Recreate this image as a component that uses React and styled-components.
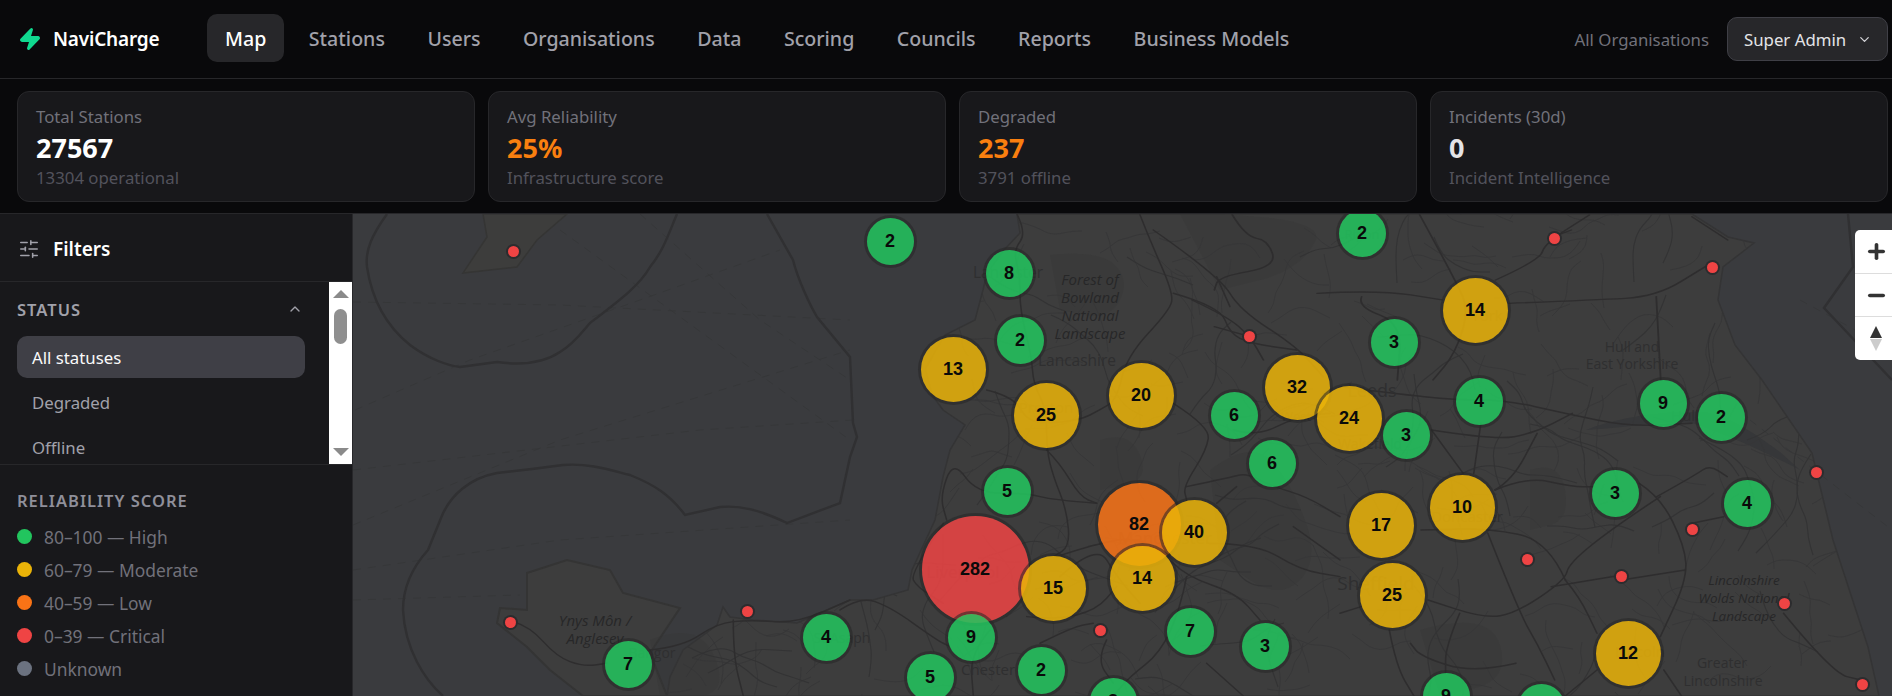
import React from 'react';
import styled, { createGlobalStyle } from 'styled-components';
import { ChevronDown, ChevronUp, Minus, Plus, SlidersHorizontal, Zap } from 'lucide-react';

const MAP_X = 353;
const MAP_Y = 214;
const UI_FONT = `'Noto Sans', 'Open Sans', sans-serif`;

const GlobalStyle = createGlobalStyle`
  html, body { margin: 0; height: 100%; overflow: hidden; background: #09090b; }
  #root { height: 100%; }
  * { box-sizing: border-box; }
`;

const Page = styled.div`
  width: 1892px;
  height: 696px;
  display: flex;
  flex-direction: column;
  overflow: hidden;
  font-family: ${UI_FONT};
  background: #09090b;
  color: #fff;
`;

const Header = styled.header`
  height: 79px;
  flex: none;
  display: flex;
  align-items: center;
  padding: 0 4px 0 18px;
  border-bottom: 1px solid #27272a;
`;

const Brand = styled.div`
  width: 189px;
  display: flex;
  align-items: center;
  gap: 11px;
  font-size: 19px;
  font-weight: 600;
  letter-spacing: -0.2px;
  color: #fff;
`;

const Nav = styled.nav`
  display: flex;
  gap: 6.5px;
  flex: 1;
`;

const NavItem = styled.div`
  height: 48px;
  display: flex;
  align-items: center;
  padding: 0 18px;
  margin-top: -2px;
  border-radius: 10px;
  font-size: 19.6px;
  font-weight: 500;
  color: ${(p) => (p.$active ? '#fff' : '#a1a1aa')};
  background: ${(p) => (p.$active ? '#27272a' : 'transparent')};
`;

const OrgLabel = styled.div`
  font-size: 16.8px;
  color: #71717a;
  margin-right: 18px;
`;

const RoleButton = styled.div`
  width: 161px;
  height: 44px;
  display: flex;
  align-items: center;
  justify-content: space-between;
  padding: 0 15px 0 16px;
  background: #27272a;
  border: 1px solid #3f3f46;
  border-radius: 10px;
  font-size: 16.8px;
  color: #e4e4e7;
`;

const StatsRow = styled.section`
  height: 135px;
  flex: none;
  display: grid;
  grid-template-columns: repeat(4, 458px);
  gap: 13px;
  padding: 12px 0 0 17px;
  border-bottom: 1px solid #27272a;
`;

const StatCard = styled.div`
  height: 111px;
  padding: 11px 18px;
  background: #18181b;
  border: 1px solid #27272a;
  border-radius: 12px;
`;

const StatLabel = styled.div`
  font-size: 16.8px;
  line-height: 28px;
  color: #71717a;
`;

const StatValue = styled.div`
  font-size: 27px;
  line-height: 33px;
  font-weight: 700;
  color: ${(p) => p.$color};
`;

const StatSub = styled.div`
  font-size: 16.8px;
  line-height: 28px;
  color: #52525b;
`;

const Body = styled.main`
  flex: 1;
  min-height: 0;
  display: flex;
`;

const Sidebar = styled.aside`
  width: 353px;
  flex: none;
  background: #18181b;
  border-right: 1px solid #27272a;
  display: flex;
  flex-direction: column;
`;

const FilterHead = styled.div`
  height: 68px;
  flex: none;
  display: flex;
  align-items: center;
  gap: 13px;
  padding: 2px 0 0 18px;
  font-size: 19px;
  font-weight: 600;
  color: #fff;
  border-bottom: 1px solid #27272a;
`;

const ScrollArea = styled.div`
  height: 183px;
  flex: none;
  display: flex;
  border-bottom: 1px solid #27272a;
  overflow: hidden;
`;

const FilterList = styled.div`
  flex: 1;
  padding: 13px 24px 0 17px;
`;

const SectionRow = styled.div`
  display: flex;
  align-items: center;
  justify-content: space-between;
  height: 28px;
  margin-bottom: 13px;
  padding-right: 2px;
  color: #a1a1aa;
`;

const SectionTitle = styled.div`
  font-size: 16.5px;
  font-weight: 600;
  letter-spacing: 1px;
  color: ${(p) => p.$color || '#a1a1aa'};
`;

const FilterOption = styled.div`
  height: 42px;
  margin-bottom: 3px;
  display: flex;
  align-items: center;
  padding-left: 15px;
  border-radius: 10px;
  font-size: 16.8px;
  color: ${(p) => (p.$active ? '#fafafa' : '#a1a1aa')};
  background: ${(p) => (p.$active ? '#3f3f46' : 'transparent')};
`;

const ScrollBar = styled.div`
  width: 23px;
  flex: none;
  background: #fff;
  display: flex;
  flex-direction: column;
  align-items: center;
  position: relative;
`;

const ScrollArrow = styled.span`
  width: 0;
  height: 0;
  position: absolute;
  border-left: 8px solid transparent;
  border-right: 8px solid transparent;
  ${(p) =>
    p.$down
      ? 'bottom: 8px; border-top: 8px solid #8a8a8a;'
      : 'top: 8px; border-bottom: 8px solid #8a8a8a;'}
`;

const ScrollThumb = styled.span`
  position: absolute;
  top: 27px;
  width: 13px;
  height: 35px;
  border-radius: 7px;
  background: #8f8f8f;
`;

const Legend = styled.div`
  padding: 24px 17px 0;
`;

const LegendList = styled.div`
  margin-top: 8px;
`;

const LegendRow = styled.div`
  height: 33px;
  display: flex;
  align-items: center;
  gap: 12px;
  font-size: 17.4px;
  color: #71717a;
`;

const Dot = styled.span`
  width: 15px;
  height: 15px;
  border-radius: 50%;
  background: ${(p) => p.$color};
`;

const MapPane = styled.div`
  flex: 1;
  position: relative;
  overflow: hidden;
  background: #3a3b3e;
`;

const MapCanvas = styled.svg`
  position: absolute;
  inset: 0;
  width: 100%;
  height: 100%;
  display: block;
`;

const TONES = {
  green: { bg: 'rgba(34,197,94,.85)', size: 47 },
  yellow: { bg: 'rgba(234,179,8,.85)', size: 65 },
  orange: { bg: 'rgba(249,115,22,.85)', size: 83 },
  red: { bg: 'rgba(239,68,68,.85)', size: 107 },
};

const Cluster = styled.div.attrs((p) => ({
  style: {
    left: p.$x - MAP_X - TONES[p.$tone].size / 2,
    top: p.$y - MAP_Y - TONES[p.$tone].size / 2,
  },
}))`
  position: absolute;
  width: ${(p) => TONES[p.$tone].size}px;
  height: ${(p) => TONES[p.$tone].size}px;
  display: flex;
  align-items: center;
  justify-content: center;
  border-radius: 50%;
  background: ${(p) => TONES[p.$tone].bg};
  box-shadow: 0 0 0 3px rgba(38, 38, 38, 0.55);
  font-family: 'Liberation Sans', Arial, sans-serif;
  font-size: 18px;
  font-weight: 700;
  color: #0a0a0a;
`;

const Pin = styled.div.attrs((p) => ({
  style: { left: p.$x - MAP_X - 5.5, top: p.$y - MAP_Y - 5.5 },
}))`
  position: absolute;
  width: 11px;
  height: 11px;
  border-radius: 50%;
  background: #ef4444;
  box-shadow: 0 0 0 2px #2c2c2e;
`;

const ZoomControl = styled.div`
  position: absolute;
  top: 16px;
  right: 0;
  width: 37px;
  height: 130px;
  background: #fff;
  border-radius: 5px 0 0 5px;
  display: flex;
  flex-direction: column;
  color: #333;
`;

const ZoomButton = styled.div`
  flex: 1;
  display: flex;
  flex-direction: column;
  align-items: center;
  justify-content: center;
  gap: 1px;
  padding-left: 5px;
  & + & {
    border-top: 1px solid #ddd;
  }
`;

const CompassUp = styled.span`
  width: 0;
  height: 0;
  border-left: 6.5px solid transparent;
  border-right: 6.5px solid transparent;
  border-bottom: 12px solid ${(p) => p.$color};
  ${(p) => p.$flip && 'transform: rotate(180deg);'}
`;

const NAV = ['Map', 'Stations', 'Users', 'Organisations', 'Data', 'Scoring', 'Councils', 'Reports', 'Business Models'];

const STATS = [
  { label: 'Total Stations', value: '27567', color: '#fff', sub: '13304 operational' },
  { label: 'Avg Reliability', value: '25%', color: '#f97f0f', sub: 'Infrastructure score' },
  { label: 'Degraded', value: '237', color: '#f97f0f', sub: '3791 offline' },
  { label: 'Incidents (30d)', value: '0', color: '#e4e4e7', sub: 'Incident Intelligence' },
];

const LEGEND = [
  { color: '#22c55e', text: '80–100 — High' },
  { color: '#eab308', text: '60–79 — Moderate' },
  { color: '#f97316', text: '40–59 — Low' },
  { color: '#ef4444', text: '0–39 — Critical' },
  { color: '#6b7280', text: 'Unknown' },
];

const CLUSTERS = [
  [2, 890, 241, 'green'], [8, 1009, 273, 'green'], [2, 1020, 340, 'green'], [13, 953, 369, 'yellow'],
  [25, 1046, 415, 'yellow'], [20, 1141, 395, 'yellow'], [6, 1234, 415, 'green'], [32, 1297, 387, 'yellow'],
  [6, 1272, 463, 'green'], [5, 1007, 491, 'green'], [282, 975, 569, 'red'], [82, 1139, 524, 'orange'],
  [15, 1053, 588, 'yellow'], [40, 1194, 532, 'yellow'], [14, 1142, 578, 'yellow'], [7, 1190, 631, 'green'],
  [3, 1265, 646, 'green'], [9, 971, 637, 'green'], [5, 930, 677, 'green'], [2, 1041, 670, 'green'],
  [3, 1113, 701, 'green'], [7, 628, 664, 'green'], [4, 826, 637, 'green'], [2, 1362, 233, 'green'],
  [14, 1475, 310, 'yellow'], [3, 1394, 342, 'green'], [24, 1349, 418, 'yellow'], [3, 1406, 435, 'green'],
  [4, 1479, 401, 'green'], [9, 1663, 403, 'green'], [2, 1721, 417, 'green'], [10, 1462, 507, 'yellow'],
  [17, 1381, 525, 'yellow'], [3, 1615, 493, 'green'], [4, 1747, 503, 'green'], [25, 1392, 595, 'yellow'],
  [12, 1628, 653, 'yellow'], [9, 1446, 696, 'green'], [3, 1541, 707, 'green'],
];

const PINS = [
  [513, 251], [510, 622], [747, 611], [1249, 336], [1100, 630], [1554, 238], [1712, 267], [1816, 472],
  [1692, 529], [1527, 559], [1621, 576], [1784, 603], [1862, 684],
];

const LAND = 'M1017 214 L1020 233 L1004 250 L987 273 L983 290 L975 320 L945 335 L925 368 L932 395 L943 410 L965 425 L950 450 L943 477 L935 520 L912 570 L908 590 L873 600 L850 600 L797 623 L753 620 L730 617 L723 607 L717 625 L683 650 L670 677 L667 696 L1879 696 L1868 647 L1833 540 L1812 453 L1762 380 L1735 345 L1718 300 L1723 267 L1754 243 L1728 237 L1692 214 Z';
const ANGLESEY = 'M527 573 L567 560 L610 570 L623 593 L680 608 L650 653 L667 696 L583 696 L550 670 L527 647 L497 623 L500 608 L527 610 Z';
const MAN = 'M483 214 L567 214 L537 240 L517 267 L463 273 L487 237 Z';

const BOUNDARIES = [
  'M387 214 C372 235 365 250 367 267 C372 300 385 325 410 345 C430 360 450 366 460 367 L497 362 C525 366 545 362 560 352 C575 343 582 332 590 323 C620 300 640 285 650 267 C664 250 670 230 677 214',
  'M767 214 L793 260 C798 280 810 305 817 317 L850 357 L853 423 L857 437 L850 457 L840 503 L787 523 C760 510 740 505 720 507 L685 515 C670 495 655 485 630 475 C610 470 590 463 563 465 L532 469 L497 473 C470 478 450 495 441 518 L428 550 C410 570 403 590 403 610 C405 650 425 680 443 696',
  'M1848 214 L1853 267 L1824 308 L1892 380',
];

const SEA_LANES = [
  'M353 302 L560 305 L850 320', 'M355 410 L470 360 L640 300 L780 250', 'M353 525 L560 440 L850 350',
  'M353 570 L560 540 L850 520', 'M353 600 L520 595', 'M640 214 L760 320 L850 380', 'M560 230 L850 440',
  'M353 470 L700 430 L853 420', 'M1750 420 L1892 530', 'M1800 300 L1892 350',
];

// traced from the reference, grouped by the crop they were read from
const ROADS_CENTRE = [
  'M530 10 L560 70 L520 120 L540 200 L540 300 L575 440 L580 520 L620 600 L620 720 L640 800 L680 900 L690 1010 L640 1040',
  'M620 720 L660 760 L720 860 L770 880',
  'M440 540 L520 560 L560 630 L620 640 L720 630 L780 600 L830 570 L860 440 L990 300 L1000 250 L930 90 L900 14',
  'M1000 250 L1140 290 L1170 370 L1230 400 L1370 420',
  'M1000 580 L1110 650 L1100 720 L1030 830 L1040 870',
  'M1180 660 L1250 680 L1370 620 L1470 610',
  'M770 880 L640 870 L560 850 L410 850 L340 750 L300 860 L320 930',
  'M650 1040 L770 1000 L900 980 L1000 1060',
  'M560 1220 L650 1230 L770 1200 L830 1130',
  'M1000 1060 L1040 1100 L1190 1150 L1260 1230',
  'M1040 830 L1180 800 L1220 790 L1300 830 L1400 860 L1500 920',
  'M1190 830 L1130 880',
  'M1040 1100 L1020 1200 L960 1330 L870 1400 L820 1458',
  'M800 1290 L770 1350 L820 1420',
  'M600 1300 L700 1250 L760 1240',
  'M450 1260 L390 1330 L400 1458',
  'M310 940 L210 1090 L230 1130 L310 1180',
  'M0 1200 L60 1160 L150 1190 L290 1290 L330 1310',
  'M1210 1458 L1100 1360',
  'M940 60 L1140 200 L1200 300 L1370 410 L1450 500',
  'M1130 200 L1170 290',
  'M1360 950 L1500 1050',
  'M660 1100 L770 1000 L830 1100 L900 1180',
  'M1100 1000 L1250 1000 L1380 1080 L1500 1100',
];

const ROADS_EAST = [
  'M0 20 L150 40 L330 60 L470 60 L640 100 L820 140 L1000 130',
  'M260 150 L440 180 L550 160 L660 100',
  'M260 150 L350 280',
  'M400 130 L380 280',
  'M440 330 L530 290 L660 320 L720 320',
  'M440 330 L490 300 L560 160',
  'M900 350 L1010 285 L1050 255 L1100 290',
  'M850 310 L910 350 L980 500 L985 600 L910 770',
  'M910 350 L780 440 L650 550 L640 600 L500 700 L410 715 L250 660',
  'M640 600 L680 650 L730 760',
  'M640 600 L590 480 L420 445 L230 450',
  'M420 460 L510 700 L560 790 L610 900',
  'M800 600 L980 570',
  'M1000 430 L1090 410',
  'M140 750 L160 860 L210 948',
  'M340 700 L300 800 L300 880',
  'M0 700 L60 680',
  'M920 870 L970 948',
  'M730 870 L640 948',
  'M500 850 L380 880 L230 830 L200 790',
  'M1260 700 L1400 880 L1480 900',
  'M600 620 L780 589',
];

const ROADS_NORTH = [
  'M510 644 L590 840 L620 930 L590 1060 L540 1140',
  'M680 840 L780 780 L790 730 L890 645',
  'M810 710 L850 690',
  'M710 910 L900 900 L1040 890 L1150 800',
  'M1040 890 L1050 1140',
  'M280 880 L420 870 L560 900',
  'M0 900 L80 950 L130 1010 L160 1080',
  'M130 1010 L50 980',
  'M380 890 L370 920 L470 970 L460 1140',
  'M90 644 L120 710 L170 720 L190 800 L60 830 L50 870',
  'M1120 650 L1200 720',
];

const ROADS_WEST = [
  'M490 1235 L540 1250 L620 1340 L700 1370 L770 1360',
  'M900 1320 L1000 1310 L1100 1240 L1200 1230 L1340 1240 L1500 1170',
  'M1150 1230 L1150 1340 L1180 1458',
];

const PARKS = [
  'M1050 255 L1100 250 L1130 280 L1110 320 L1060 310 Z',
  'M1210 470 L1250 440 L1290 480 L1320 560 L1280 600 L1220 560 Z',
  'M1180 214 L1330 214 L1300 270 L1220 290 Z',
  'M650 640 L700 620 L730 696 L660 696 Z',
  'M1530 470 L1560 460 L1570 520 L1530 530 Z',
  'M1420 630 L1490 610 L1510 680 L1440 696 Z',
  'M1100 440 L1130 430 L1150 480 L1100 490 Z',
];

// rounds the corners of a traced polyline so roads don't read as straight segments
const smooth = (d) => {
  const nums = d.match(/-?\d+(\.\d+)?/g).map(Number);
  const pts = [];
  for (let i = 0; i < nums.length; i += 2) pts.push([nums[i], nums[i + 1]]);
  let out = `M${pts[0][0]} ${pts[0][1]}`;
  for (let i = 1; i < pts.length - 1; i++) {
    const mx = (pts[i][0] + pts[i + 1][0]) / 2;
    const my = (pts[i][1] + pts[i + 1][1]) / 2;
    out += ` Q${pts[i][0]} ${pts[i][1]} ${mx} ${my}`;
  }
  const last = pts[pts.length - 1];
  return `${out} L${last[0]} ${last[1]}`;
};

// seeded walks so the land keeps its road-map grain
const makeWalks = (seed0, count, stepLen, minSteps, extra) => {
  let seed = seed0;
  const rnd = () => {
    seed = (seed * 16807) % 2147483647;
    return seed / 2147483647;
  };
  const walks = [];
  for (let i = 0; i < count; i++) {
    let x = 670 + rnd() * 1190;
    let y = 214 + rnd() * 482;
    let a = rnd() * Math.PI * 2;
    let d = `M${x.toFixed(0)} ${y.toFixed(0)}`;
    const steps = minSteps + Math.floor(rnd() * extra);
    for (let s = 0; s < steps; s++) {
      a += (rnd() - 0.5) * 1.2;
      x += Math.cos(a) * stepLen;
      y += Math.sin(a) * stepLen;
      d += ` L${x.toFixed(0)} ${y.toFixed(0)}`;
    }
    walks.push(smooth(d));
  }
  return walks;
};

const LANES = makeWalks(4127, 420, 11, 3, 5);
const B_ROADS = makeWalks(991, 70, 18, 4, 5);

const LABELS = [
  { x: 1008, y: 278, t: 'Lancaster', s: 15.5 },
  { x: 1077, y: 366, t: 'Lancashire', s: 15.5 },
  { x: 1046, y: 413, t: 'Preston', s: 15 },
  { x: 963, y: 578, t: 'Liverpool', s: 17 },
  { x: 1165, y: 544, t: 'Manchester', s: 17 },
  { x: 988, y: 675, t: 'Chester', s: 15 },
  { x: 1362, y: 239, t: 'Ripon', s: 13 },
  { x: 1487, y: 321, t: 'York', s: 15 },
  { x: 1372, y: 397, t: 'Leeds', s: 18 },
  { x: 1296, y: 421, t: 'West', s: 13 },
  { x: 1370, y: 449, t: 'Wakefield', s: 14 },
  { x: 1376, y: 590, t: 'Sheffield', s: 19 },
  { x: 1467, y: 522, t: 'Doncaster', s: 15 },
  { x: 1685, y: 421, t: 'Hull', s: 15 },
  { x: 1632, y: 352, t: 'Hull and', s: 14 },
  { x: 1632, y: 369, t: 'East Yorkshire', s: 14 },
  { x: 1640, y: 657, t: 'Lincoln', s: 15 },
  { x: 1722, y: 668, t: 'Greater', s: 14 },
  { x: 1723, y: 686, t: 'Lincolnshire', s: 14 },
  { x: 652, y: 658, t: 'Bangor', s: 14 },
  { x: 842, y: 643, t: 'St Asaph', s: 14 },
  { x: 1090, y: 285, t: 'Forest of', s: 15, i: true },
  { x: 1090, y: 303, t: 'Bowland', s: 15, i: true },
  { x: 1090, y: 321, t: 'National', s: 15, i: true },
  { x: 1090, y: 339, t: 'Landscape', s: 15, i: true },
  { x: 1744, y: 585, t: 'Lincolnshire', s: 13.5, i: true },
  { x: 1744, y: 603, t: 'Wolds National', s: 13.5, i: true },
  { x: 1744, y: 621, t: 'Landscape', s: 13.5, i: true },
  { x: 595, y: 626, t: 'Ynys Môn /', s: 15, i: true },
  { x: 595, y: 644, t: 'Anglesey', s: 15, i: true },
];

const RoadGroup = ({ roads, transform, width }) => (
  <g transform={transform} strokeWidth={width}>
    {roads.map((d) => (
      <path key={d} d={smooth(d)} />
    ))}
  </g>
);

const BaseMap = () => (
  <MapCanvas viewBox={`${MAP_X} ${MAP_Y} 1539 482`} preserveAspectRatio="none">
    <path d={LAND} fill="#3d3d3d" />
    <path d={ANGLESEY} fill="#3d3d3d" />
    <path d={MAN} fill="#3d3d3c" />
    <path d="M1586 430 C1630 428 1660 420 1692 423 C1730 435 1770 455 1800 470 L1780 452 C1750 430 1720 410 1692 412 C1650 412 1610 420 1586 430 Z" fill="#363739" />
    {PARKS.map((d) => (
      <path key={d} d={smooth(d)} fill="#373738" opacity="0.45" />
    ))}
    <g stroke="#353637" strokeWidth="0.8" strokeDasharray="8 7" fill="none">
      {SEA_LANES.map((d) => (
        <path key={d} d={d} />
      ))}
    </g>
    <g stroke="#303032" strokeWidth="2.4" fill="none">
      {BOUNDARIES.map((d) => (
        <path key={d} d={d} />
      ))}
    </g>
    <clipPath id="land-clip">
      <path d={LAND} />
    </clipPath>
    <g clipPath="url(#land-clip)" fill="none">
      <g stroke="#373738" strokeWidth="0.9">
        {LANES.map((d) => (
          <path key={d} d={d} />
        ))}
      </g>
      <g stroke="#333334" strokeWidth="1.1">
        {B_ROADS.map((d) => (
          <path key={d} d={d} />
        ))}
      </g>
    </g>
    <path d={MAN} stroke="#353534" strokeWidth="1.5" fill="none" />
    <path d={ANGLESEY} stroke="#343434" strokeWidth="2" fill="none" />
    <path d={LAND} stroke="#343435" strokeWidth="1.5" fill="none" />
    <g stroke="#2e2d2e" fill="none" strokeLinejoin="round" strokeLinecap="round">
      <RoadGroup roads={ROADS_CENTRE} transform="translate(840 210) scale(0.3333)" width={4.5} />
      <RoadGroup roads={ROADS_EAST} transform="translate(1340 380) scale(0.352 0.3333)" width={4.5} />
      <RoadGroup roads={ROADS_NORTH} transform="translate(1192 0) scale(0.4464 0.3333)" width={4} />
      <RoadGroup roads={ROADS_WEST} transform="translate(350 210) scale(0.3333)" width={4.5} />
    </g>
    <g fontFamily="'Open Sans', sans-serif" textAnchor="middle">
      {LABELS.map((l) => (
        <text
          key={l.t + l.y}
          x={l.x}
          y={l.y}
          fontSize={l.s}
          fill={l.i ? '#272728' : '#2f2f30'}
          fontStyle={l.i ? 'italic' : 'normal'}
        >
          {l.t}
        </text>
      ))}
    </g>
  </MapCanvas>
);

export default function App() {
  return (
    <Page>
      <GlobalStyle />
      <Header>
        <Brand>
          <Zap size={24} color="#10d98f" fill="#10d98f" />
          NaviCharge
        </Brand>
        <Nav>
          {NAV.map((item) => (
            <NavItem key={item} $active={item === 'Map'}>
              {item}
            </NavItem>
          ))}
        </Nav>
        <OrgLabel>All Organisations</OrgLabel>
        <RoleButton>
          Super Admin
          <ChevronDown size={15} color="#d4d4d8" />
        </RoleButton>
      </Header>
      <StatsRow>
        {STATS.map((s) => (
          <StatCard key={s.label}>
            <StatLabel>{s.label}</StatLabel>
            <StatValue $color={s.color}>{s.value}</StatValue>
            <StatSub>{s.sub}</StatSub>
          </StatCard>
        ))}
      </StatsRow>
      <Body>
        <Sidebar>
          <FilterHead>
            <SlidersHorizontal size={22} color="#a1a1aa" strokeWidth={1.7} />
            Filters
          </FilterHead>
          <ScrollArea>
            <FilterList>
              <SectionRow>
                <SectionTitle>STATUS</SectionTitle>
                <ChevronUp size={16} />
              </SectionRow>
              <FilterOption $active>All statuses</FilterOption>
              <FilterOption>Degraded</FilterOption>
              <FilterOption>Offline</FilterOption>
            </FilterList>
            <ScrollBar>
              <ScrollArrow />
              <ScrollThumb />
              <ScrollArrow $down />
            </ScrollBar>
          </ScrollArea>
          <Legend>
            <SectionTitle $color="#8f8f9a">RELIABILITY SCORE</SectionTitle>
            <LegendList>
              {LEGEND.map((l) => (
                <LegendRow key={l.text}>
                  <Dot $color={l.color} />
                  {l.text}
                </LegendRow>
              ))}
            </LegendList>
          </Legend>
        </Sidebar>
        <MapPane>
          <BaseMap />
          {PINS.map(([x, y]) => (
            <Pin key={`${x}-${y}`} $x={x} $y={y} />
          ))}
          {CLUSTERS.map(([n, x, y, tone]) => (
            <Cluster key={`${x}-${y}`} $x={x} $y={y} $tone={tone}>
              {n}
            </Cluster>
          ))}
          <ZoomControl>
            <ZoomButton>
              <Plus size={23} strokeWidth={3.8} />
            </ZoomButton>
            <ZoomButton>
              <Minus size={23} strokeWidth={3.8} />
            </ZoomButton>
            <ZoomButton>
              <CompassUp $color="#333" />
              <CompassUp $color="#ccc" $flip />
            </ZoomButton>
          </ZoomControl>
        </MapPane>
      </Body>
    </Page>
  );
}
